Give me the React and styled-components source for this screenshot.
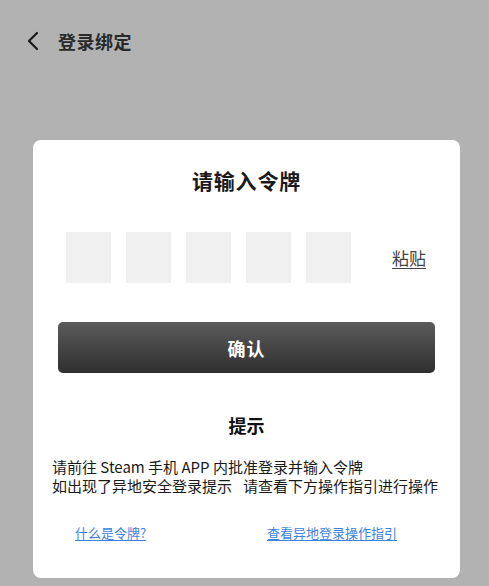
import React, { useState } from 'react'
import styled, { createGlobalStyle } from 'styled-components'

const GlobalStyle = createGlobalStyle`
    html, body {
        margin: 0;
        padding: 0;
        background: #b2b2b2;
    }
    body {
        font-family: "Noto Sans CJK SC", "Noto Sans", sans-serif;
    }
`

const Page = styled.div`
    width: 489px;
    height: 586px;
    background: #b2b2b2;
    display: flex;
    flex-direction: column;
    overflow: hidden;
`

const Header = styled.div`
    height: 82px;
    display: flex;
    align-items: center;
    padding-left: 24px;
    gap: 16px;
`

const BackButton = styled.button`
    background: none;
    border: none;
    padding: 0;
    width: 18px;
    height: 22px;
    display: flex;
    align-items: center;
    justify-content: center;
    cursor: pointer;
`

const Title = styled.h1`
    margin: 0;
    font-size: 18px;
    font-weight: 700;
    color: #2a2a2a;
    letter-spacing: 0.5px;
`

const Card = styled.div`
    margin: 58px 0 0 33px;
    width: 427px;
    height: 438px;
    background: #fff;
    border-radius: 8px;
    padding-top: 25px;
    box-sizing: border-box;
    display: flex;
    flex-direction: column;
`

const Heading = styled.h2`
    margin: 0;
    font-size: 21px;
    line-height: 30px;
    font-weight: 700;
    color: #1a1a1a;
    text-align: center;
    letter-spacing: 0.8px;
`

const CodeRow = styled.div`
    margin-top: 37px;
    padding-left: 33px;
    display: flex;
    align-items: center;
`

const Boxes = styled.div`
    display: flex;
    gap: 15px;
`

const CodeBox = styled.input`
    width: 45px;
    height: 51px;
    border: none;
    outline: none;
    background: #f0f0f0;
    padding: 0;
    text-align: center;
    font-size: 22px;
`

const Paste = styled.span`
    margin-left: 41px;
    font-size: 17px;
    color: #444;
    text-decoration: underline;
    text-underline-offset: 3px;
    cursor: pointer;
`

const Confirm = styled.button`
    margin: 39px 25px 0;
    height: 51px;
    border: none;
    border-radius: 5px;
    background: linear-gradient(#5b5b5b, #2f2f2f);
    color: #fff;
    font-family: inherit;
    font-size: 18px;
    font-weight: 700;
    letter-spacing: 1px;
    cursor: pointer;
`

const TipTitle = styled.h3`
    margin: 39px 0 0;
    font-size: 18px;
    line-height: 26px;
    font-weight: 700;
    color: #111;
    text-align: center;
`

const TipText = styled.p`
    margin: 19px 0 0;
    padding-left: 19px;
    font-size: 15px;
    line-height: 19px;
    color: #1a1a1a;
    white-space: nowrap;
`

const Gap = styled.span`
    display: inline-block;
    width: ${(props) => props.w}px;
`

const Links = styled.div`
    margin-top: 29px;
    padding: 0 63px 0 42px;
    display: flex;
    justify-content: space-between;
`

const HelpLink = styled.a`
    font-size: 13px;
    line-height: 18px;
    color: #3b82e0;
    text-decoration: underline;
    text-underline-offset: 2px;
    cursor: pointer;
`

const App = () => {
    const [code, setCode] = useState(['', '', '', '', ''])

    const handleChange = (i, v) => {
        const next = [...code]
        next[i] = v.slice(-1)
        setCode(next)
    }

    return (
        <>
            <GlobalStyle />
            <Page>
                <Header>
                    <BackButton aria-label="返回">
                        <svg width="14" height="20" viewBox="0 0 14 20" fill="none">
                            <path d="M11 2 L3 10 L11 18" stroke="#1a1a1a" strokeWidth="2.2" strokeLinecap="round" strokeLinejoin="round" />
                        </svg>
                    </BackButton>
                    <Title>登录绑定</Title>
                </Header>

                <Card>
                    <Heading>请输入令牌</Heading>
                    <CodeRow>
                        <Boxes>
                            {code.map((c, i) => (
                                <CodeBox key={i} value={c} onChange={(e) => handleChange(i, e.target.value)} />
                            ))}
                        </Boxes>
                        <Paste>粘贴</Paste>
                    </CodeRow>
                    <Confirm>确认</Confirm>
                    <TipTitle>提示</TipTitle>
                    <TipText>
                        请前往 Steam 手机 APP 内批准登录并输入令牌
                        <br />
                        如出现了异地安全登录提示<Gap w={11} />请查看下方操作指引进行操作
                    </TipText>
                    <Links>
                        <HelpLink>什么是令牌?</HelpLink>
                        <HelpLink>查看异地登录操作指引</HelpLink>
                    </Links>
                </Card>
            </Page>
        </>
    )
}

export default App
